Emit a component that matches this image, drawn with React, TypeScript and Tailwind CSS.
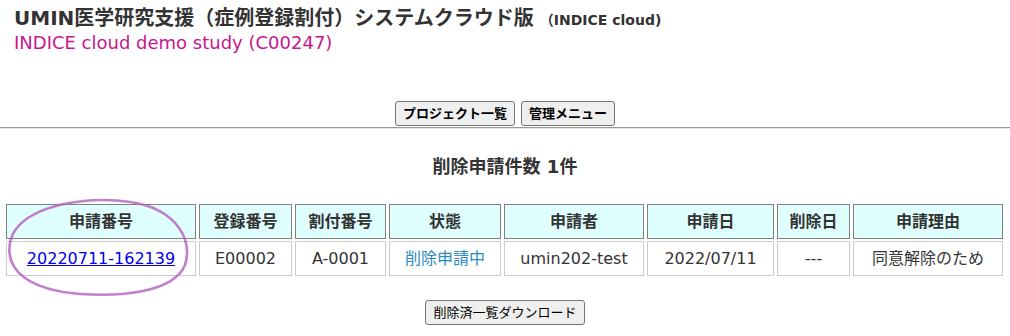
const FONT = "font-['DejaVu_Sans','Noto_Sans_CJK_JP',sans-serif]";

const COLS = [
  { label: '申請番号', w: 'w-[190px]' },
  { label: '登録番号', w: 'w-[93px]' },
  { label: '割付番号', w: 'w-[91px]' },
  { label: '状態', w: 'w-[112px]' },
  { label: '申請者', w: 'w-[140px]' },
  { label: '申請日', w: 'w-[127px]' },
  { label: '削除日', w: 'w-[73px]' },
  { label: '申請理由', w: 'w-[150px]' },
];

function Btn({ children, bold }: { children: React.ReactNode; bold?: boolean }) {
  return (
    <button
      className={`h-[25px] px-[7px] rounded-[3px] border border-[#767676] bg-[#efefef] text-[13px] leading-none text-black ${bold ? 'font-bold' : ''}`}
    >
      {children}
    </button>
  );
}

function Circle() {
  // hand-drawn marker annotation around the request number
  return (
    <svg className="absolute left-0 top-[195px] pointer-events-none" width="200" height="105" viewBox="0 0 200 105">
      <path
        d="M 136 8 C 176 16 193 44 185 70 C 174 97 122 102 80 99 C 30 95 5 76 10 48 C 15 20 55 6 102 5 C 122 5 138 7 154 13"
        fill="none"
        stroke="#b35fbf"
        strokeOpacity="0.8"
        strokeWidth="2.6"
        strokeLinecap="round"
      />
    </svg>
  );
}

export default function App() {
  return (
    <div className={`relative min-h-screen bg-white text-[#333] ${FONT}`}>
      <div className="pl-[14px] pt-[6px]">
        <h1 className="text-[20px] font-bold leading-[24px] text-[#333]">
          UMIN医学研究支援（症例登録割付）システムクラウド版
          <span className="ml-[6px] text-[14px] font-bold">（INDICE cloud)</span>
        </h1>
        <p className="text-[18px] leading-[22px] text-[#c8168c]">INDICE cloud demo study (C00247)</p>
      </div>

      <div className="mt-[47px] flex justify-center gap-[6px]">
        <Btn bold>プロジェクト一覧</Btn>
        <Btn bold>管理メニュー</Btn>
      </div>
      <div className="mt-px border-t border-b border-t-[#999] border-b-[#e5e5e5]" />

      <h2 className="mt-[26px] text-center text-[18px] font-bold leading-[24px] text-[#333]">
        削除申請件数 1件
      </h2>

      <table className="mt-[23px] ml-[3px] w-[1000px] table-fixed border-separate border-spacing-x-[3px] border-spacing-y-[2px] text-[16px]">
        <thead>
          <tr>
            {COLS.map(c => (
              <th key={c.label} className={`${c.w} h-[35px] border border-[#808080] bg-[#dfffff] font-bold text-[#333] text-center`}>
                {c.label}
              </th>
            ))}
          </tr>
        </thead>
        <tbody>
          <tr className="text-center">
            <td className="h-[35px] border border-[#ccc]">
              <a href="#" className="text-[#0000ee] underline">20220711-162139</a>
            </td>
            <td className="border border-[#ccc]">E00002</td>
            <td className="border border-[#ccc]">A-0001</td>
            <td className="border border-[#ccc] text-[#2b8ac0]">削除申請中</td>
            <td className="border border-[#ccc]">umin202-test</td>
            <td className="border border-[#ccc]">2022/07/11</td>
            <td className="border border-[#ccc]">---</td>
            <td className="border border-[#ccc]">同意解除のため</td>
          </tr>
        </tbody>
      </table>

      <div className="mt-[22px] flex justify-center">
        <Btn>削除済一覧ダウンロード</Btn>
      </div>

      <Circle />
    </div>
  );
}
